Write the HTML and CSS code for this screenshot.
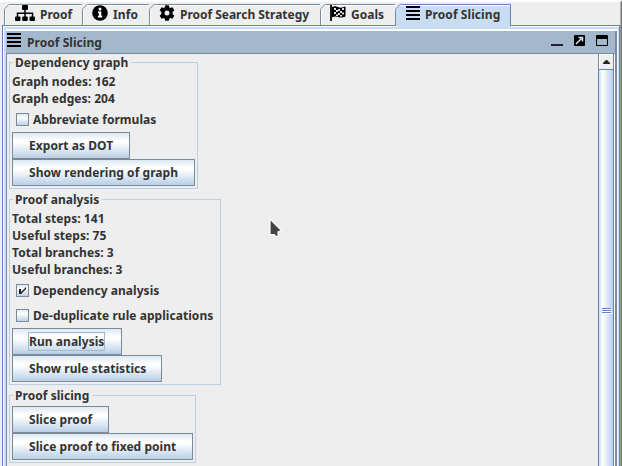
FILE: index.html
```html
<!DOCTYPE html>
<html lang="en">
<head>
<meta charset="utf-8">
<title>Proof Slicing</title>
<link rel="stylesheet" href="styles.css">
</head>
<body>
<div class="app">
  <nav class="tabs">
    <div class="tab t1"><svg class="corner" width="6" height="6" viewBox="0 0 6 6"><path d="M0 0H6L0 6Z" fill="#eee"/><path d="M0 5.5L5.5 0" stroke="#7a8a99"/></svg>
      <svg class="ico" width="20" height="16" viewBox="0 0 20 16"><rect x="7" width="6" height="5" rx="1"/><rect y="11.500" width="5.500" height="4.500" rx="1"/><rect x="7.200" y="11.500" width="5.500" height="4.500" rx="1"/><rect x="14.500" y="11.500" width="5.500" height="4.500" rx="1"/><path d="M10 5v7M2.500 12V8.300h15V12" fill="none" stroke="#000" stroke-width="1.500"/></svg><span>Proof</span></div>
    <div class="tab t2"><svg class="corner" width="6" height="6" viewBox="0 0 6 6"><path d="M0 0H6L0 6Z" fill="#eee"/><path d="M0 5.5L5.5 0" stroke="#7a8a99"/></svg>
      <svg class="ico" width="16" height="16" viewBox="0 0 16 16"><circle cx="8" cy="8" r="7.8"/><path d="M6.7 2.8h2.6v2.6H6.7zM6 6.6h3.3v4.2h1v1.7H5.9v-1.7h1V8.3H6z" fill="#fff"/></svg><span>Info</span></div>
    <div class="tab t3"><svg class="corner" width="6" height="6" viewBox="0 0 6 6"><path d="M0 0H6L0 6Z" fill="#eee"/><path d="M0 5.5L5.5 0" stroke="#7a8a99"/></svg>
      <svg class="ico" width="16" height="16" viewBox="0 0 16 16"><path fill-rule="evenodd" d="M6.200.2h3.600l.4 2.100 1.100.600 2.100-.7L15.300 5.300l-1.700 1.600v2.200l1.700 1.600-1.900 3.100-2.100-.7-1.100.600-.4 2.100H6.200l-.4-2.100-1.100-.600-2.100.7L.7 10.700l1.700-1.600V6.900L.7 5.300l1.900-3.100 2.100.7 1.100-.600zM8 5.500a2.500 2.500 0 1 0 0 5a2.500 2.500 0 1 0 0-5z"/></svg><span>Proof Search Strategy</span></div>
    <div class="tab t4"><svg class="corner" width="6" height="6" viewBox="0 0 6 6"><path d="M0 0H6L0 6Z" fill="#eee"/><path d="M0 5.5L5.5 0" stroke="#7a8a99"/></svg>
      <svg class="ico" width="16" height="16" viewBox="0 0 16 16"><path d="M1 0v16" stroke="#000" stroke-width="1.8"/><path d="M2 2q3-1.500 6 0t7.500-.5v10q-3.500 1.800-7 .5T2 12.500z"/><path d="M4 3h2v2H4zM8 4h2v2H8zM12 3h2v2h-2zM6 5h2v2H6zM10 6h2v2h-2zM4 7h2v2H4zM8 8h2v2H8zM12 7.500h2v2h-2zM6 9.500h2v1.500H6zM10 10h2v1.500h-2z" fill="#ddd"/></svg><span>Goals</span></div>
    <div class="tab t5"><svg class="corner" width="6" height="6" viewBox="0 0 6 6"><path d="M0 0H6L0 6Z" fill="#eee"/><path d="M0 5.5L5.5 0" stroke="#6382bf"/></svg>
      <svg class="ico" width="14" height="14" viewBox="0 0 14 14"><path d="M0 0h14v2H0zM0 4h14v2H0zM0 8h14v2H0zM0 12h14v2H0z"/></svg><span>Proof Slicing</span></div>
  </nav>
  <main class="pane">
    <section class="dock">
      <header class="title">
        <svg class="ico" width="14" height="14" viewBox="0 0 14 14"><path d="M0 0h14v2H0zM0 4h14v2H0zM0 8h14v2H0zM0 12h14v2H0z"/></svg><span>Proof Slicing</span>
        <div class="controls">
          <svg width="12" height="12" viewBox="0 0 12 12"><path d="M0 9h12v2H0z" fill="#223"/></svg>
          <svg width="11" height="11" viewBox="0 0 11 11"><rect width="11" height="11" rx="1"/><path d="M2 9L7.500 3.500M4.500 2.500H8.500V6.500" fill="none" stroke="#d5e0ea" stroke-width="1.500"/></svg>
          <svg width="12" height="11" viewBox="0 0 12 11"><rect width="12" height="11" rx="1"/><path d="M1 4h10v6H1z" fill="#a3b8cc"/></svg>
        </div>
      </header>
      <div class="view">
        <div class="content">
          <section class="group g1">
            <h2>Dependency graph</h2>
            <p>Graph nodes: 162</p>
            <p>Graph edges: 204</p>
            <label><i class="box"></i><span>Abbreviate formulas</span></label>
            <button class="b1"><span>Export as DOT</span></button>
            <button class="b2"><span>Show rendering of graph</span></button>
          </section>
          <section class="group g2">
            <h2>Proof analysis</h2>
            <p>Total steps: 141</p>
            <p>Useful steps: 75</p>
            <p>Total branches: 3</p>
            <p>Useful branches: 3</p>
            <label><i class="box"><svg width="11" height="11" viewBox="0 0 11 11"><path d="M2 4h2v3L9 2v2L4 9H2z" fill="#222"/></svg></i><span>Dependency analysis</span></label>
            <label><i class="box"></i><span>De-duplicate rule applications</span></label>
            <button class="b3"><span class="focus">Run analysis</span></button>
            <button class="b4"><span>Show rule statistics</span></button>
          </section>
          <section class="group g3">
            <h2>Proof slicing</h2>
            <button class="b5"><span>Slice proof</span></button>
            <button class="b6"><span>Slice proof to fixed point</span></button>
          </section>
        </div>
        <div class="scroll">
          <div class="up"><svg width="7" height="4" viewBox="0 0 7 4"><path d="M3 0h1l3 3v1H0V3z" fill="#222"/></svg></div>
          <div class="thumb"><svg width="10" height="6" viewBox="0 0 10 6"><path d="M1 1h9v1H1zM1 3h9v1H1zM1 5h9v1H1z" fill="#fff"/><path d="M0 0h9v1H0zM0 2h9v1H0zM0 4h9v1H0z" fill="#6382bf"/></svg></div>
        </div>
      </div>
    </section>
  </main>
  <svg class="cursor" width="14" height="22" viewBox="0 0 14 22"><path d="M1 1L12.500 12.500L9 14V18L7.500 19L5 16.500H1Z" fill="#444" stroke="#fff" stroke-width="1.200"/></svg>
</div>
</body>
</html>
```
FILE: styles.css
```css
* { box-sizing: border-box; }
body { margin: 0; background: #eee; color: #333; font: bold 12px/17px "Noto Sans", sans-serif; letter-spacing: 0.05px; }
.app { position: relative; width: 622px; height: 466px; overflow: hidden; display: flex; flex-direction: column; border-top: 2px solid #fff; border-right: 1px solid #777; }
svg { display: block; flex: none; }
span, p, h2 { white-space: nowrap; }
.tabs { display: flex; height: 23px; padding: 2px 0 0 4px; border-right: 1px solid #b0b0b0; }
.tab { position: relative; height: 21px; border-top: 1px solid #7a8a99; border-right: 1px solid #7a8a99; box-shadow: inset 0 1px #fff, inset 1px 0 #fff; display: flex; align-items: flex-start; letter-spacing: 0; }
.tab span { padding-top: 1px; }
.corner { position: absolute; left: -1px; top: -1px; }
.t1 { width: 79px; border-left: 1px solid #7a8a99; padding-left: 10px; }
.t1 span { margin-left: 5px; }
.t2 { width: 67px; padding-left: 9px; }
.t2 span { margin-left: 5px; letter-spacing: 0.1px; }
.t3 { width: 171px; padding-left: 9px; }
.t3 span { margin-left: 5px; letter-spacing: -0.02px; }
.t4 { width: 75px; padding-left: 9px; }
.t4 span { margin-left: 5px; }
.t5 { width: 115px; height: 25px; z-index: 1; padding-left: 10px; background: #c8ddf2; border-color: #6382bf; border-right: 0; box-shadow: inset 0 1px #fff, inset -1px 0 #c8ddf2; }
.t5::after { content: ""; position: absolute; right: 0; top: 0; width: 1px; height: 21px; background: #6382bf; }
.t5 .ico { margin-top: 1px; }
.t5 span { margin-left: 5px; letter-spacing: 0.08px; }
.pane { flex: 1; min-height: 0; margin: 0 1px 0 2px; border: solid #6382bf; border-width: 1px 1px 0; background: #c8ddf2; box-shadow: inset 1px 1px #fff, 1px 0 #999; padding: 3px 1px 0 3px; display: flex; }
.dock { flex: 1; min-width: 0; border-top: 2px solid #fff; border-right: 1px solid #fff; display: flex; flex-direction: column; }
.title { height: 23px; margin-right: 0; background: #a3b8cc; border-bottom: 1px solid #7a8a99; border-right: 2px solid #7a8a99; display: flex; align-items: flex-start; padding: 2px 7px 0 1px; }
.title span { margin-left: 6px; padding-top: 1px; }
.controls { margin-left: auto; display: flex; gap: 11px; padding-top: 2px; }
.view { flex: 1; min-height: 0; display: flex; background: #eee; border-left: 1px solid #7a8a99; border-right: 2px solid #7a8a99; }
.content { flex: 1; padding: 1px 0 0 2px; }
.group { position: relative; border: 1px solid #b8cfe5; margin-top: 7px; padding: 0 2px; }
.group + .group { margin-top: 10px; }
h2 { position: absolute; left: 3px; top: -9px; margin: 0; padding: 0 3px 0 2px; background: #eee; font: inherit; }
p { margin: 0; }
.g1 { width: 189px; height: 127px; padding-top: 10px; }
.g2 { width: 212px; height: 186px; padding-top: 10px; }
.g3 { width: 187px; height: 68px; padding-top: 10px; }
label { display: flex; align-items: center; height: 25px; padding-left: 4px; }
.box { width: 13px; height: 13px; border: 1px solid #7a8a99; background: linear-gradient(#dde8f3, #fff 35%, #b8cfe5); margin-right: 4px; }
button { display: flex; align-items: center; height: 27px; margin: 0; padding: 0 0 0 16px; border: 1px solid #7a8a99; border-radius: 0; background: linear-gradient(#dde8f3, #fff 30%, #fff 38%, #b8cfe5); font: inherit; letter-spacing: inherit; color: inherit; }
.b1 { width: 118px; } .b2 { width: 183px; }
.b3 { width: 110px; } .b4 { width: 150px; }
.b5 { width: 97px; } .b6 { width: 181px; }
.focus { outline: 1px solid #a3b8cc; }
.scroll { width: 17px; border-left: 1px solid #7a8a99; border-right: 1px solid #fff; display: flex; flex-direction: column; }
.up { height: 15px; display: flex; align-items: center; justify-content: center; box-shadow: inset 1px 1px #fff; border-right: 1px solid #7a8a99; }
.thumb { flex: 1; border-top: 1px solid #6382bf; border-right: 1px solid #6382bf; background: linear-gradient(90deg, #c8ddf2, #fff 25%, #b8cfe5); padding: 238px 0 0 3px; box-shadow: -1px 0 #6382bf; }
.cursor { position: absolute; left: 269px; top: 216px; }
```
